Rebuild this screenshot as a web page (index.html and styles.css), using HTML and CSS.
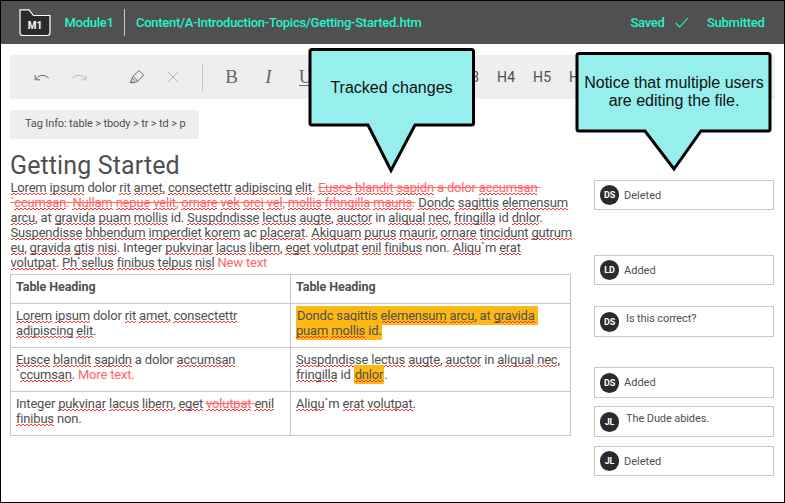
FILE: index.html
```html
<!DOCTYPE html>
<html lang="en">
<head>
<meta charset="utf-8">
<title>Getting Started</title>
<link rel="stylesheet" href="styles.css">
</head>
<body>
<div class="app">
  <header class="topbar">
    <div class="folder">
      <svg width="32" height="28" viewBox="0 0 32 28"><path d="M1 .8H10L14.500 6.500H31V23.500Q31 26.500 28 26.500H4Q1 26.500 1 23.500Z" fill="#2b2b2b" stroke="#fff" stroke-width="1.200"/></svg>
      <span class="folder-label">M1</span>
    </div>
    <span class="module">Module1</span>
    <span class="bar-divider"></span>
    <span class="path">Content/A-Introduction-Topics/Getting-Started.htm</span>
    <span class="saved">Saved</span>
    <svg class="check" width="14" height="12" viewBox="0 0 14 12"><path d="M.8 6L4.600 10L12.800 1.200" fill="none" stroke="#27f2cb" stroke-width="1.100"/></svg>
    <span class="submitted">Submitted</span>
  </header>

  <div class="toolbar">
    <span class="tool undo"><svg width="16" height="9" viewBox="0 0 16 9" fill="none" stroke="#6b6b6b"><path d="M1.200 2V6.800H6M1.500 6.500Q4 2.500 8 2.300Q12.500 2.200 14.700 5.200"/></svg></span>
    <span class="tool redo"><svg width="16" height="9" viewBox="0 0 16 9" fill="none" stroke="#b9b9b9"><path d="M14.800 2V6.800H10M14.500 6.500Q12 2.500 8 2.300Q3.500 2.200 1.300 5.200"/></svg></span>
    <span class="tool brush"><svg width="16" height="16" viewBox="0 0 16 16" fill="none" stroke="#666"><path d="M10 1.500L14.600 6.100L8.700 12L4 7.400ZM4 7.400L3 9.200L6.800 13L8.700 12M3.200 9.700L1 13.700H5.800L6.500 12.800M2.600 11.800L4 13.400"/></svg></span>
    <span class="tool clear"><svg width="12" height="12" viewBox="0 0 12 12" fill="none" stroke="#b5b5b5"><path d="M1 1L11 11M11 1L1 11"/></svg></span>
    <span class="tool-divider"></span>
    <span class="tool glyph">B</span>
    <span class="tool glyph italic">I</span>
    <span class="tool glyph"><span class="underlined">U</span></span>
    <span class="headings"><span class="h">H3</span><span class="h">H4</span><span class="h">H5</span><span class="h">H6</span></span>
  </div>

  <div class="taginfo">Tag Info: table &gt; tbody &gt; tr &gt; td &gt; p</div>

  <main class="workspace">
    <article class="document">
      <h1>Getting Started</h1>
      <p class="body"><span class="line"><u>Lorem</u> <u>ipsum</u> dolor <u>rit</u> <u>amet</u>, <u>consectettr</u> <u>adipiscing</u> <u>elit</u>. <del><u>Eusce</u> <u>blandit</u> <u>sapidn</u> a dolor <u>accumsan</u>&nbsp;</del></span><span class="line"><del>`<u>ccumsan</u>. <u>Nullam</u> <u>nepue</u> <u>velit</u>, <u>ornare</u> <u>vek</u> <u>orci</u> <u>vel</u>, <u>mollis</u> <u>frhngilla</u> <u>mauris</u>.</del> <u>Dondc</u> <u>sagittis</u> <u>elemensum</u></span><span class="line"><u>arcu</u>, at <u>gravida</u> <u>puam</u> <u>mollis</u> id. <u>Suspdndisse</u> <u>lectus</u> <u>augte</u>, <u>auctor</u> in <u>aliqual</u> <u>nec</u>, <u>fringilla</u> id <u>dnlor</u>.</span><span class="line"><u>Suspendisse</u> <u>bhbendum</u> <u>imperdiet</u> <u>korem</u> ac <u>placerat</u>. <u>Akiquam</u> <u>purus</u> <u>maurir</u>, <u>ornare</u> <u>tincidunt</u> <u>gutrum</u></span><span class="line"><u>eu</u>, <u>gravida</u> <u>gtis</u> <u>nisi</u>. Integer <u>pukvinar</u> <u>lacus</u> <u>libern</u>, <u>eget</u> <u>volutpat</u> <u>enil</u> <u>finibus</u> non. <u>Aliqu</u>`m <u>erat</u></span><span class="line"><u>volutpat</u>. <u>Ph`sellus</u> <u>finibus</u> <u>telpus</u> <u>nisl</u> <ins>New text</ins></span></p>
      <table>
        <tr><th>Table Heading</th><th>Table Heading</th></tr>
        <tr>
          <td><u>Lorem</u> <u>ipsum</u> dolor <u>rit</u> <u>amet</u>, <u>consectettr</u><br><u>adipiscing</u> <u>elit</u>.</td>
          <td><mark class="long">Dondc sagittis <u>elemensum</u> <u>arcu</u>, at <u>gravida</u>&nbsp;<br><u>puam</u> <u>mollis</u> id.</mark></td>
        </tr>
        <tr>
          <td><u>Eusce</u> <u>blandit</u> <u>sapidn</u> a dolor <u>accumsan</u><br>`<u>ccumsan</u>. <ins>More text.</ins></td>
          <td><u>Suspdndisse</u> <u>lectus</u> <u>augte</u>, <u>auctor</u> in <u>aliqual</u> <u>nec</u>,<br><u>fringilla</u> id <mark class="word"><u>dnlor</u></mark>.</td>
        </tr>
        <tr>
          <td>Integer <u>pukvinar</u> <u>lacus</u> <u>libern</u>, <u>eget</u> <del><u>volutpat</u>&nbsp;</del><u>enil</u><br><u>finibus</u> non.</td>
          <td><u>Aliqu</u>`m <u>erat</u> <u>volutpat</u>.</td>
        </tr>
      </table>
    </article>
    <aside class="comments">
      <div class="card first"><span class="avatar">DS</span>Deleted</div>
      <div class="card second"><span class="avatar">LD</span>Added</div>
      <div class="card third note"><span class="avatar">DS</span><span class="note-text">Is this correct?</span></div>
      <div class="card fourth"><span class="avatar">DS</span>Added</div>
      <div class="card fifth note"><span class="avatar">JL</span><span class="note-text">The Dude abides.</span></div>
      <div class="card sixth"><span class="avatar">JL</span>Deleted</div>
    </aside>
  </main>

  <div class="callout changes">
    <svg width="168" height="128" viewBox="0 0 168 128"><path d="M4 2.500H163.500Q165.500 2.500 165.500 4.500V76Q165.500 78 163.500 78H107L83 123.500L60 78H4Q2 78 2 76V4.500Q2 2.500 4 2.500Z" fill="#96efec" stroke="#000" stroke-width="3"/></svg>
    <div class="callout-text">Tracked changes</div>
  </div>
  <div class="callout users">
    <svg width="198" height="123" viewBox="0 0 198 123"><path d="M4 2.500H193Q195 2.500 195 4.500V78Q195 80 193 80H126L99 118L70 80H4Q2 80 2 78V4.500Q2 2.500 4 2.500Z" fill="#96efec" stroke="#000" stroke-width="3"/></svg>
    <div class="callout-text">Notice that multiple users<br>are editing the file.</div>
  </div>
</div>
</body>
</html>
```
FILE: styles.css
```css
* { box-sizing: border-box; }
body { margin: 0; font-family: Roboto, sans-serif; color: #4f4f4f; background: #fff; }
.app { position: relative; width: 785px; height: 503px; border: 1px solid #000; overflow: hidden; }
svg { display: block; flex: none; }

.topbar { display: flex; align-items: center; height: 43px; padding-left: 18px; background: #505050; color: #27f2cb; font-size: 13px; font-weight: 500; letter-spacing: -.27px; white-space: nowrap; }
.folder { display: grid; width: 32px; margin-right: 13.500px; }
.folder > * { grid-area: 1 / 1; }
.folder-label { align-self: end; justify-self: center; margin-bottom: 4px; font-size: 10px; line-height: 14px; color: #fff; font-weight: 700; letter-spacing: 0; }
.module { width: 59.500px; }
.bar-divider { width: 1px; height: 27px; margin-right: 11px; background: #c8c8c8; }
.path { width: 494.500px; }
.saved { width: 44.500px; }
.check { margin-right: 18px; }

.toolbar { display: flex; align-items: center; width: 765px; height: 44px; margin: 11px 0 0 9px; background: #eee; border-radius: 2px; }
.tool { display: flex; justify-content: center; width: 37px; }
.undo { margin-left: 13px; }
.brush { margin-left: 21px; }
.clear { width: 36px; }
.tool-divider { width: 1px; height: 27px; margin: 0 10px 0 11px; background: #c4c4c4; }
.glyph { font: 19px/22px "Liberation Serif", serif; color: #666; }
.italic { font-style: italic; }
.underlined { border-bottom: 1px solid #666; line-height: 16px; height: 17px; }
.headings { display: flex; gap: 18px; margin-left: 137px; font-size: 14px; letter-spacing: .3px; }
.h { width: 18px; }

.taginfo { width: 189px; height: 29px; margin: 11px 0 0 9px; padding-left: 15px; background: #eee; border-radius: 2px; font-size: 11px; line-height: 28px; letter-spacing: -.13px; white-space: nowrap; }

.workspace { display: flex; align-items: flex-start; margin-left: 9px; }
.document { width: 561px; margin-top: 12px; font-size: 13px; line-height: 15px; letter-spacing: -.187px; white-space: nowrap; }
h1 { margin: 0; font-size: 25px; line-height: 29px; font-weight: 400; letter-spacing: .12px; }
.body { margin: 0 0 4px; padding-left: .5px; }
.line { display: block; }
u { text-decoration: none; background: repeating-linear-gradient(90deg, #f33 0 2px, transparent 2px 4px) 0 100% / 100% 1px no-repeat, repeating-linear-gradient(90deg, transparent 0 2px, #f33 2px 4px) 0 calc(100% - 1px) / 100% 1px no-repeat; }
ins, del { color: #ff6666; }
ins { text-decoration: none; }
table { width: 561px; border-collapse: collapse; table-layout: fixed; }
td, th { height: 44px; padding: 4px 5px 0; border: 1px solid #c8c8c8; vertical-align: top; text-align: left; }
th { height: 29px; font-weight: 700; font-size: 12.500px; letter-spacing: -.07px; }
mark { background: #fdb813; color: inherit; border-radius: 1px; }
.long { padding: 2px 0 2px 1px; }
.word { padding: 2px 1px; }

.comments { width: 180px; margin: 41px 0 0 23px; font-size: 11px; }
.card { display: flex; align-items: center; height: 30px; padding-left: 5px; border: 1px solid #c8c8c8; }
.avatar { width: 19px; height: 20px; margin-right: 5px; border-radius: 10px; background: #2b2b2b; color: #fff; font-size: 9px; font-weight: 700; line-height: 20px; text-align: center; letter-spacing: -.2px; }
.second { margin-top: 45px; }
.third { margin-top: 21px; height: 31px; }
.fourth { margin-top: 30px; height: 31px; }
.fifth { margin-top: 8px; height: 31px; }
.sixth { margin-top: 9px; }
.note-text { margin: -7px 0 0 2px; letter-spacing: -.1px; }

.callout { position: absolute; color: #111; font: 16px/18px "Liberation Sans", sans-serif; }
.callout-text { position: absolute; left: 0; right: 0; text-align: center; white-space: nowrap; }
.changes { left: 307px; top: 46px; }
.changes .callout-text { top: 32px; right: 1px; }
.users { left: 574px; top: 50px; }
.users .callout-text { top: 23px; }
```
